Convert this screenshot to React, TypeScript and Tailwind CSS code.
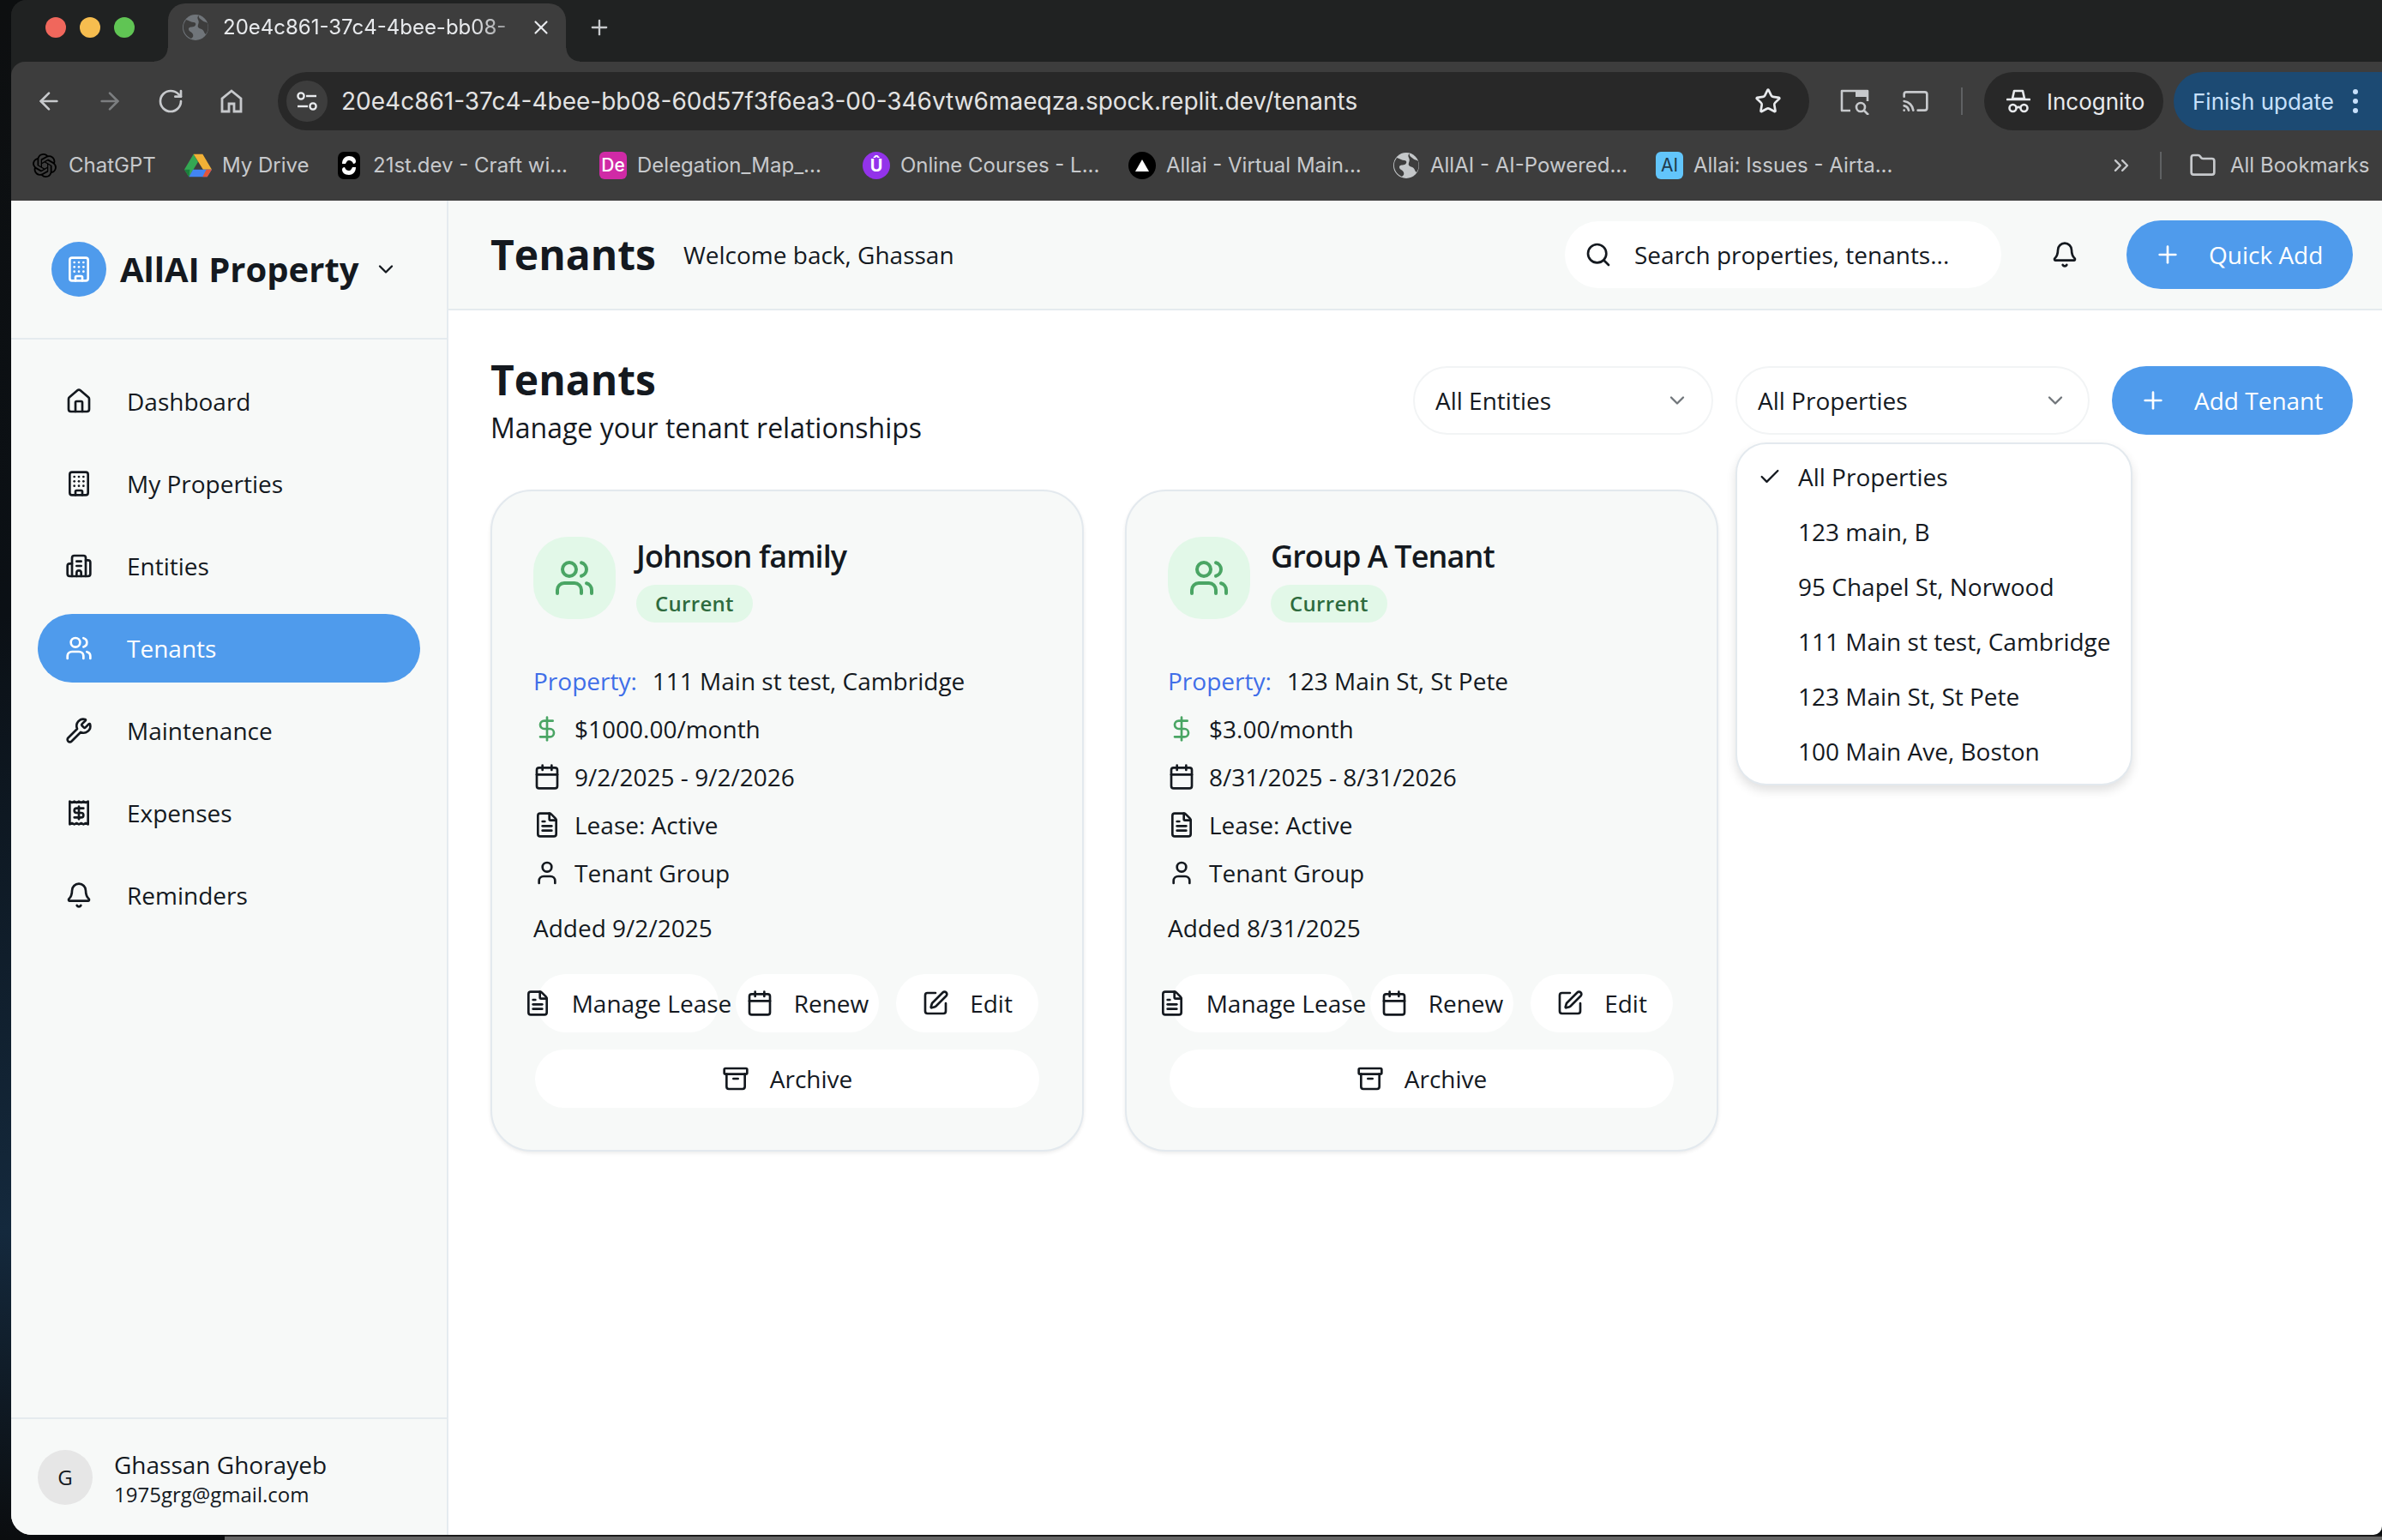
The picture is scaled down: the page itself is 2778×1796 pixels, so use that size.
import React from 'react';
import {
  Archive,
  ArrowLeft,
  ArrowRight,
  Bell,
  Building,
  Building2,
  Calendar,
  Cast,
  Check,
  ChevronDown,
  ChevronsRight,
  DollarSign,
  FileText,
  Folder,
  Home,
  Plus,
  Receipt,
  RotateCw,
  Search,
  SquarePen,
  Star,
  User,
  Users,
  Wrench,
  X,
} from 'lucide-react';
import { SiOpenai } from 'react-icons/si';

const navItems = [
  { label: 'Dashboard', icon: Home },
  { label: 'My Properties', icon: Building },
  { label: 'Entities', icon: Building2 },
  { label: 'Tenants', icon: Users, active: true },
  { label: 'Maintenance', icon: Wrench },
  { label: 'Expenses', icon: Receipt },
  { label: 'Reminders', icon: Bell },
];

const tenants = [
  {
    name: 'Johnson family',
    property: '111 Main st test, Cambridge',
    rent: '$1000.00/month',
    term: '9/2/2025 - 9/2/2026',
    added: 'Added 9/2/2025',
  },
  {
    name: 'Group A Tenant',
    property: '123 Main St, St Pete',
    rent: '$3.00/month',
    term: '8/31/2025 - 8/31/2026',
    added: 'Added 8/31/2025',
  },
];

const propertyOptions = [
  'All Properties',
  '123 main, B',
  '95 Chapel St, Norwood',
  '111 Main st test, Cambridge',
  '123 Main St, St Pete',
  '100 Main Ave, Boston',
];

const GlobeIcon = ({ bg, fg }: { bg: string; fg: string }) => (
  <svg viewBox="0 0 32 32" className="w-8 h-8 shrink-0">
    <circle cx="16" cy="16" r="15" fill={bg} />
    <path d="M5 7c4 1 6 3 9 3s3 4 0 5-6 0-6 3 4 3 5 6-1 4-2 5C6 27 1 21 2 14c0-3 2-5 3-7Z" fill={fg} />
    <path d="M20 2c-1 3 2 4 4 6s4 1 6 3c1 5 1 9-2 13-2-1-2-5-5-6s-5-2-4-5 1-4 0-6-1-4 1-5Z" fill={fg} />
  </svg>
);

const DriveIcon = () => (
  <svg viewBox="0 0 30 27" className="w-8 h-8 shrink-0">
    <path d="M10 1 15 9.5 5 26 0 18Z" fill="#34a853" />
    <path d="M10 1h10l10 17H20.5Z" fill="#f2b136" />
    <path d="M9.5 18H30l-5 8H5Z" fill="#4285f4" />
    <path d="M5 26 0 18h6Z" fill="#1a7f3c" />
    <path d="M24 18h6l-5 8h-5Z" fill="#e2553a" />
  </svg>
);

const TwentyFirstIcon = () => (
  <svg viewBox="0 0 32 32" className="w-8 h-8 shrink-0">
    <rect x="3" width="26" height="32" rx="7" fill="#000" />
    <path d="M8 14c0-6 4-9 8-9 5 0 8 3 8 6 0 2-1 3-3 3-1-3-3-4-5-4-2 0-3 2-4 4Z" fill="#fff" />
    <path d="M24 18c0 6-4 9-8 9-5 0-8-3-8-6 0-2 1-3 3-3 1 3 3 4 5 4 2 0 3-2 4-4Z" fill="#fff" />
  </svg>
);

const Favicon = ({ className, children }: { className: string; children: React.ReactNode }) => (
  <span className={`w-8 h-8 shrink-0 flex items-center justify-center ${className}`}>{children}</span>
);

const bookmarks = [
  { label: 'ChatGPT', width: 'w-[179px]', icon: <SiOpenai className="w-7 h-7 mx-0.5 shrink-0 text-black" /> },
  { label: 'My Drive', width: 'w-[176px]', icon: <DriveIcon /> },
  { label: '21st.dev - Craft wi...', width: 'w-[308px]', icon: <TwentyFirstIcon /> },
  {
    label: 'Delegation_Map_...',
    width: 'w-[307px]',
    icon: <Favicon className="rounded-md bg-[#d02aa6] text-white text-[21px] font-medium">De</Favicon>,
  },
  {
    label: 'Online Courses - L...',
    width: 'w-[310px]',
    icon: <Favicon className="rounded-full bg-[#9333ea] text-white text-[20px] font-bold">Û</Favicon>,
  },
  {
    label: 'Allai - Virtual Main...',
    width: 'w-[308px]',
    icon: (
      <Favicon className="rounded-full bg-black">
        <span className="w-0 h-0 border-x-[8px] border-x-transparent border-b-[14px] border-b-white" />
      </Favicon>
    ),
  },
  { label: 'AllAI - AI-Powered...', width: 'w-[307px]', icon: <GlobeIcon bg="#c4c7c9" fg="#3d3d3d" /> },
  {
    label: 'Allai: Issues - Airta...',
    width: 'w-[290px]',
    icon: <Favicon className="rounded-md bg-[#62c5fb] text-[#1f3a4d] text-[21px]">AI</Favicon>,
  },
];

const IncognitoIcon = () => (
  <svg viewBox="0 0 28 28" className="w-7 h-7 shrink-0" fill="none" stroke="#e8eaed" strokeWidth="2.6">
    <path d="M9 2h10l2 9H7Z" strokeLinejoin="round" />
    <path d="M1 12h26" strokeLinecap="round" />
    <circle cx="7.5" cy="22" r="4" />
    <circle cx="20.5" cy="22" r="4" />
    <path d="M11.5 21.5c1.6-.8 3.4-.8 5 0" />
  </svg>
);

const SiteInfoIcon = () => (
  <svg viewBox="0 0 28 28" className="w-7 h-7" fill="none" stroke="#e8eaed" strokeWidth="2.4">
    <circle cx="7" cy="8" r="3.6" />
    <path d="M13 8h12" />
    <circle cx="21" cy="20" r="3.6" />
    <path d="M3 20h12" />
  </svg>
);

const TabSearchIcon = () => (
  <svg viewBox="0 0 36 32" className="w-9 h-8 shrink-0" fill="none" stroke="#c7c9cc" strokeWidth="2.6">
    <path d="M13 27H3V4h30v12" strokeLinejoin="round" />
    <path d="M19 3h15v8H19Z" fill="#c7c9cc" stroke="none" />
    <circle cx="25" cy="23" r="5" />
    <path d="M29 27l5 5" />
  </svg>
);

const ChromeHomeIcon = () => (
  <svg viewBox="0 0 32 32" className="w-8 h-8 shrink-0" fill="none" stroke="#c7c9cc" strokeWidth="2.8">
    <path d="M16 4 27 13v15h-8v-9h-6v9H5V13Z" strokeLinejoin="miter" />
  </svg>
);

const Traffic = ({ className }: { className: string }) => <span className={`w-6 h-6 rounded-full ${className}`} />;

const ActionButton = ({
  icon: Icon,
  label,
  className,
}: {
  icon: React.ElementType;
  label: string;
  className: string;
}) => (
  <button
    type="button"
    className={`h-[68px] rounded-full bg-white flex items-center justify-center gap-6 text-[28px] text-[#14191f] whitespace-nowrap ${className}`}
  >
    <Icon size={32} className="shrink-0" />
    {label}
  </button>
);

const TenantCard = ({ tenant }: { tenant: (typeof tenants)[number] }) => (
  <div className="h-[772px] rounded-[48px] border-2 border-[#e3e9ee] bg-[#f7f9f8] shadow-[0_2px_4px_rgba(0,0,0,0.08)] px-12 pt-12">
    <div className="flex items-center gap-6">
      <div className="w-24 h-24 rounded-[40px] bg-[#e2f8e8] flex items-center justify-center shrink-0">
        <Users size={48} className="text-[#4aa564]" />
      </div>
      <div className="flex flex-col items-start">
        <h3 className="text-[36px] leading-[56px] font-semibold tracking-tight text-[#14191f]">{tenant.name}</h3>
        <span className="mt-[5px] h-11 px-[22px] rounded-full bg-[#e2f8e8] text-[#2e6b3e] text-[24px] font-semibold tracking-[0.3px] flex items-center">
          Current
        </span>
      </div>
    </div>

    <div className="mt-10 text-[28px] text-[#14191f]">
      <div className="h-14 flex items-center gap-[18px]">
        <span className="text-[#3f6ee8] font-medium">Property:</span>
        <span>{tenant.property}</span>
      </div>
      <div className="h-14 flex items-center gap-4">
        <DollarSign size={32} className="text-[#4aa564]" />
        {tenant.rent}
      </div>
      <div className="h-14 flex items-center gap-4">
        <Calendar size={32} />
        {tenant.term}
      </div>
      <div className="h-14 flex items-center gap-4">
        <FileText size={32} />
        Lease: Active
      </div>
      <div className="h-14 flex items-center gap-4">
        <User size={32} />
        Tenant Group
      </div>
      <p className="mt-4 leading-10">{tenant.added}</p>
    </div>

    <div className="mt-[34px] ml-1 flex gap-5">
      <ActionButton icon={FileText} label="Manage Lease" className="w-[212px]" />
      <ActionButton icon={Calendar} label="Renew" className="w-[167px]" />
      <ActionButton icon={SquarePen} label="Edit" className="w-[166px]" />
    </div>
    <div className="mt-5 mx-0.5">
      <ActionButton icon={Archive} label="Archive" className="w-full" />
    </div>
  </div>
);

export default function App() {
  return (
    <div className="w-[2778px] h-[1796px] overflow-hidden bg-[linear-gradient(180deg,#0d0f10_0%,#0b1015_40%,#14293d_80%,#0b0d0f_100%)] font-['Open_Sans',sans-serif]">
      <div className="ml-[13px] h-[1790px] flex flex-col rounded-tl-[18px] rounded-bl-[24px] rounded-br-[10px] overflow-hidden bg-[#202222]">
        {/* Browser chrome */}
        <div className="h-[72px] bg-[#202222] flex items-end font-['Inter',sans-serif] shrink-0">
          <div className="flex items-center gap-4 pl-10 pb-2 w-[183px] h-full">
            <Traffic className="bg-[#f0675c]" />
            <Traffic className="bg-[#f6bd4f]" />
            <Traffic className="bg-[#60c554]" />
          </div>
          <div className="relative w-[464px] h-[68px] bg-[#3d3d3d] rounded-t-[20px] flex items-center pl-4 pr-4 pb-3 gap-4">
            <span className="absolute -left-4 bottom-0 w-4 h-4 bg-[radial-gradient(circle_at_0_0,transparent_15px,#3d3d3d_16px)]" />
            <span className="absolute -right-4 bottom-0 w-4 h-4 bg-[radial-gradient(circle_at_100%_0,transparent_15px,#3d3d3d_16px)]" />
            <GlobeIcon bg="#70757a" fg="#3d3d3d" />
            <span className="flex-1 whitespace-nowrap text-[24px] text-[#e8eaed] [mask-image:linear-gradient(90deg,#000_85%,#0006)]">
              20e4c861-37c4-4bee-bb08-
            </span>
            <X size={26} className="text-[#e8eaed] shrink-0" />
          </div>
          <Plus size={28} className="text-[#c7c9cc] ml-[25px] mb-[26px]" />
        </div>

        <div className="h-[162px] bg-[#3d3d3d] rounded-tl-[16px] flex flex-col font-['Inter',sans-serif] shrink-0">
          <div className="h-[92px] flex items-center pt-3 pb-3 shrink-0">
            <div className="w-[311px] flex items-center pl-[28px] gap-[39px] text-[#c7c9cc]">
              <ArrowLeft size={32} />
              <ArrowRight size={32} className="text-[#7c7e80]" />
              <RotateCw size={32} />
              <ChromeHomeIcon />
            </div>
            <div className="w-[1786px] h-[68px] rounded-full bg-[#282828] flex items-center pl-[10px] pr-8 shrink-0">
              <span className="w-12 h-12 rounded-full bg-[#3d3d3d] flex items-center justify-center shrink-0">
                <SiteInfoIcon />
              </span>
              <span className="ml-4 flex-1 text-[28px] text-[#e3e3e3] whitespace-nowrap">
                20e4c861-37c4-4bee-bb08-60d57f3f6ea3-00-346vtw6maeqza.spock.replit.dev/tenants
              </span>
              <Star size={32} className="text-[#e8eaed] shrink-0" />
            </div>
            <div className="ml-[35px] flex items-center gap-[37px] text-[#c7c9cc] shrink-0">
              <TabSearchIcon />
              <Cast size={32} />
              <span className="w-0.5 h-8 bg-[#5f6163]" />
            </div>
            <div className="ml-[25px] w-[209px] h-[68px] rounded-full bg-[#282828] flex items-center pl-[26px] gap-[19px] text-[26px] text-[#e8eaed] shrink-0">
              <IncognitoIcon />
              Incognito
            </div>
            <div className="ml-3 flex-1 h-[68px] rounded-l-full rounded-r-[10px] bg-[#1c4a73] flex items-center pl-[22px] gap-[22px] text-[26px] text-[#c7e0fb] whitespace-nowrap">
              Finish update
              <span className="flex flex-col gap-[5px]">
                <span className="w-[6px] h-[6px] rounded-full bg-[#c7e0fb]" />
                <span className="w-[6px] h-[6px] rounded-full bg-[#c7e0fb]" />
                <span className="w-[6px] h-[6px] rounded-full bg-[#c7e0fb]" />
              </span>
            </div>
          </div>
          <div className="flex-1 flex items-center pl-[23px] text-[24px] text-[#c7c9cc] pb-[12px]">
            {bookmarks.map(b => (
              <div key={b.label} className={`flex items-center gap-3 whitespace-nowrap shrink-0 ${b.width}`}>
                {b.icon}
                {b.label}
              </div>
            ))}
            <ChevronsRight size={28} className="ml-[239px] shrink-0" />
            <span className="ml-[31px] w-0.5 h-8 bg-[#5f6163] shrink-0" />
            <Folder size={32} className="ml-[32px] shrink-0" />
            <span className="ml-[16px] whitespace-nowrap">All Bookmarks</span>
          </div>
        </div>

        {/* App */}
        <div className="flex-1 flex min-h-0 bg-white">
          <aside className="w-[510px] shrink-0 bg-[#f7f9f8] border-r-2 border-[#e5ebef] flex flex-col text-[#14191f]">
            <div className="h-[162px] border-b-2 border-[#e5ebef] pl-[47px] flex items-center gap-4 shrink-0">
              <span className="w-16 h-16 rounded-full bg-[#4f9bec] flex items-center justify-center">
                <Building size={32} className="text-white" />
              </span>
              <span className="text-[40px] font-bold">AllAI Property</span>
              <ChevronDown size={28} className="ml-[1px]" />
            </div>
            <nav className="flex-1 pt-8 px-[31px]">
              {navItems.map(item => (
                <div
                  key={item.label}
                  className={`h-20 mb-4 rounded-full flex items-center gap-10 pl-8 text-[28px] font-medium ${
                    item.active ? 'bg-[#4f9bec] text-white' : ''
                  }`}
                >
                  <item.icon size={32} />
                  {item.label}
                </div>
              ))}
            </nav>
            <div className="h-[137px] border-t-2 border-[#e5ebef] pl-[31px] flex items-center gap-[25px] shrink-0">
              <span className="w-16 h-16 rounded-full bg-[#e6e6e6] flex items-center justify-center text-[24px] font-medium">
                G
              </span>
              <div className="mt-0.5">
                <p className="text-[28px] leading-[38px]">Ghassan Ghorayeb</p>
                <p className="text-[24px] leading-[32px]">1975grg@gmail.com</p>
              </div>
            </div>
          </aside>

          <main className="flex-1 min-w-0 flex flex-col text-[#14191f]">
            <header className="h-[128px] bg-[#f7f9f8] border-b-2 border-[#e5ebef] pl-[49px] pr-[34px] flex items-center shrink-0">
              <h1 className="text-[48px] font-bold">Tenants</h1>
              <span className="ml-8 text-[28px]">Welcome back, Ghassan</span>
              <div className="ml-auto w-[509px] h-[78px] rounded-full bg-white flex items-center pl-[23px] gap-[26px] text-[28px]">
                <Search size={32} />
                Search properties, tenants...
              </div>
              <Bell size={32} className="ml-[58px]" />
              <button
                type="button"
                className="ml-[56px] w-[264px] h-20 rounded-full bg-[#4f9bec] text-white text-[28px] font-medium flex items-center pl-8 gap-8"
              >
                <Plus size={32} />
                Quick Add
              </button>
            </header>

            <div className="flex-1 pl-[49px] pr-[34px] pt-[49px]">
              <div className="flex items-center justify-between">
                <div>
                  <h2 className="text-[48px] leading-[64px] font-bold">Tenants</h2>
                  <p className="text-[32px] leading-[48px]">Manage your tenant relationships</p>
                </div>
                <div className="flex items-center gap-[26px]">
                  <div className="w-[350px] h-20 rounded-full bg-white border-2 border-[#f2f4f5] flex items-center justify-between pl-6 pr-[26px] text-[28px]">
                    All Entities
                    <ChevronDown size={28} className="text-[#70757a]" />
                  </div>
                  <div className="relative w-[413px] h-20 rounded-full bg-white border-2 border-[#f2f4f5] flex items-center justify-between pl-6 pr-6 text-[28px]">
                    All Properties
                    <ChevronDown size={28} className="text-[#70757a]" />
                    <div className="absolute z-10 -left-0.5 top-[87px] w-[463px] rounded-[36px] border-2 border-[#e3e9ee] bg-white shadow-[0_6px_12px_rgba(0,0,0,0.12)] py-1.5">
                      {propertyOptions.map((option, i) => (
                        <div key={option} className="relative h-16 flex items-center pl-[71px] whitespace-nowrap">
                          {i === 0 && <Check size={28} className="absolute left-6" />}
                          {option}
                        </div>
                      ))}
                    </div>
                  </div>
                  <button
                    type="button"
                    className="w-[281px] h-20 rounded-full bg-[#4f9bec] text-white text-[28px] font-medium flex items-center pl-8 gap-8"
                  >
                    <Plus size={32} />
                    Add Tenant
                  </button>
                </div>
              </div>

              <div className="mt-12 grid grid-cols-3 gap-12">
                {tenants.map(t => (
                  <TenantCard key={t.name} tenant={t} />
                ))}
              </div>
            </div>
          </main>
        </div>
      </div>
      <div className="h-[6px] pl-[262px]">
        <div className="h-full bg-[#666666] border-t-2 border-[#1a1a1a]" />
      </div>
    </div>
  );
}
